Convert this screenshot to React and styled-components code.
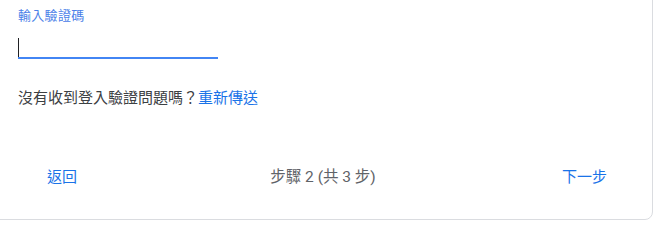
import React from "react";
import styled, { createGlobalStyle } from "styled-components";

const Global = createGlobalStyle`
  html, body { margin: 0; padding: 0; background: #fff; }
  body { font-family: Roboto, "Noto Sans CJK TC", "Noto Sans", sans-serif; overflow: hidden; }
`;

const Card = styled.div`
  box-sizing: border-box;
  width: 673px;
  margin: -20px 0 0 -20px;
  padding: 20px 0 0 20px;
  border: 1px solid #dadce0;
  border-radius: 8px;
  background: #fff;
`;

const Body = styled.div`
  padding: 6px 0 0 17px;
`;

const Label = styled.div`
  font-size: 13px;
  line-height: 18px;
  color: #4a80e8;
  letter-spacing: 0.3px;
`;

const Field = styled.div`
  width: 200px;
  height: 25px;
  margin-top: 7px;
  border-bottom: 2px solid #4285f4;
  display: flex;
  align-items: flex-start;
`;

const Caret = styled.span`
  display: block;
  width: 1px;
  height: 19px;
  margin-top: 6px;
  background: #202124;
`;

const Hint = styled.p`
  margin: 28px 0 0;
  font-size: 15px;
  line-height: 22px;
  color: #3c4043;
`;

const Link = styled.a`
  color: #1a73e8;
  text-decoration: none;
  cursor: pointer;
`;

const Footer = styled.div`
  display: flex;
  align-items: center;
  justify-content: space-between;
  height: 36px;
  margin-top: 50px;
  padding: 0 45px 0 46px;
  margin-bottom: 24px;
`;

const TextButton = styled.button`
  border: none;
  background: none;
  padding: 0;
  font-family: inherit;
  font-size: 15px;
  line-height: 22px;
  color: #1a73e8;
  cursor: pointer;
`;

const Step = styled.span`
  font-size: 15.5px;
  line-height: 22px;
  color: #5f6368;
  margin-left: 7px;
`;

export default function App() {
  return (
    <>
      <Global />
      <Card>
        <Body>
          <Label>輸入驗證碼</Label>
          <Field>
            <Caret />
          </Field>
          <Hint>
            沒有收到登入驗證問題嗎？<Link>重新傳送</Link>
          </Hint>
        </Body>
        <Footer>
          <TextButton>返回</TextButton>
          <Step>步驟 2 (共 3 步)</Step>
          <TextButton>下一步</TextButton>
        </Footer>
      </Card>
    </>
  );
}
